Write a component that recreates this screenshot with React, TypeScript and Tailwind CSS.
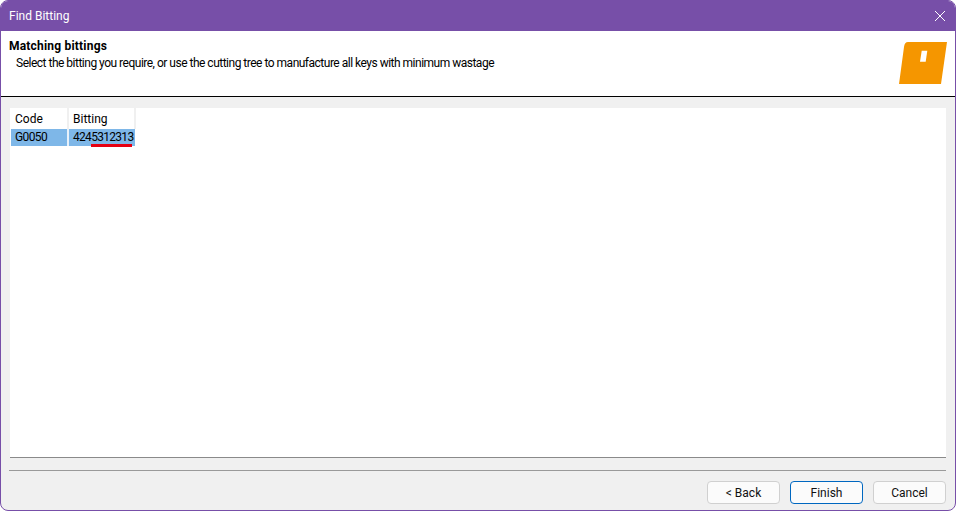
import React from "react";

function Btn({ label, primary }: { label: string; primary?: boolean }) {
  return (
    <button
      className={
        "w-[73px] h-[23px] rounded-[4px] border text-[12px] text-[#111] flex items-center justify-center bg-[#fbfbfb] " +
        (primary ? "border-[#0067c0]" : "border-[#d0d0d0]")
      }
    >
      {label}
    </button>
  );
}

export default function App() {
  return (
    <div className="w-[956px] h-[511px] bg-white overflow-hidden" style={{ fontFamily: 'Roboto, "Noto Sans", sans-serif' }}>
      <div className="w-full h-full flex flex-col rounded-[8px] overflow-hidden border border-[#774fa8] bg-[#f0f0f0]">
        <div className="h-[30px] shrink-0 bg-[#774fa8] flex items-center justify-between pl-[8px] pr-[9px] text-white text-[12px]">
          <span>Find Bitting</span>
          <svg width="12" height="12" viewBox="0 0 12 12" fill="none" stroke="#fff" strokeWidth="1">
            <path d="M1 1 L11 11 M11 1 L1 11" />
          </svg>
        </div>
        <div className="h-[66px] shrink-0 bg-white border-b border-black flex justify-between pl-[8px] pr-[8px] pt-[7px]">
          <div className="text-[12px] leading-[16px] text-black">
            <div className="font-bold tracking-[0.2px]">Matching bittings</div>
            <div className="pl-[7px] pt-[1px] tracking-[-0.5px]">Select the bitting you require, or use the cutting tree to manufacture all keys with minimum wastage</div>
          </div>
          <svg width="48" height="43" viewBox="0 0 48 43" className="mt-[4px]">
            <path d="M9 0 L48 0 L42 42 L0 42 L5 5 Q5.6 0 9 0 Z" fill="#f59600" />
            <path d="M22.7 8.7 L28.3 8.7 L26.7 19.7 L21 19.7 Z" fill="#fff" />
          </svg>
        </div>
        <div className="flex-1 flex flex-col px-[9px] pt-[11px]">
          <div className="h-[350px] shrink-0 bg-white border-b border-[#8a8a8a] text-[12px] text-black">
            <div className="flex h-[21px] w-[126px] ml-[1px]">
              <div className="w-[58px] shrink-0 border-r-2 border-[#f0f0f0] pl-[4px] pt-[1px] leading-[21px]">Code</div>
              <div className="w-[67px] shrink-0 border-r-2 border-[#f0f0f0] pl-[4px] pt-[1px] leading-[21px]">Bitting</div>
            </div>
            <div className="flex h-[17px] w-[124px] ml-[1px] bg-[#7eb7e8] relative">
              <div className="w-[58px] shrink-0 border-r-2 border-[#e8f1fa] pl-[4px] leading-[17px] tracking-[-0.6px]">G0050</div>
              <div className="pl-[4px] leading-[17px] whitespace-nowrap tracking-[-0.7px]">4245312313</div>
              <div className="absolute left-[80px] top-[15px] w-[41px] h-[3px] bg-[#e60012]" />
            </div>
          </div>
          <div className="h-px bg-[#9a9a9a] mt-[12px] -ml-px" />
          <div className="flex justify-end gap-[10px] mt-[10px]">
            <Btn label="< Back" />
            <Btn label="Finish" primary />
            <Btn label="Cancel" />
          </div>
        </div>
      </div>
    </div>
  );
}
